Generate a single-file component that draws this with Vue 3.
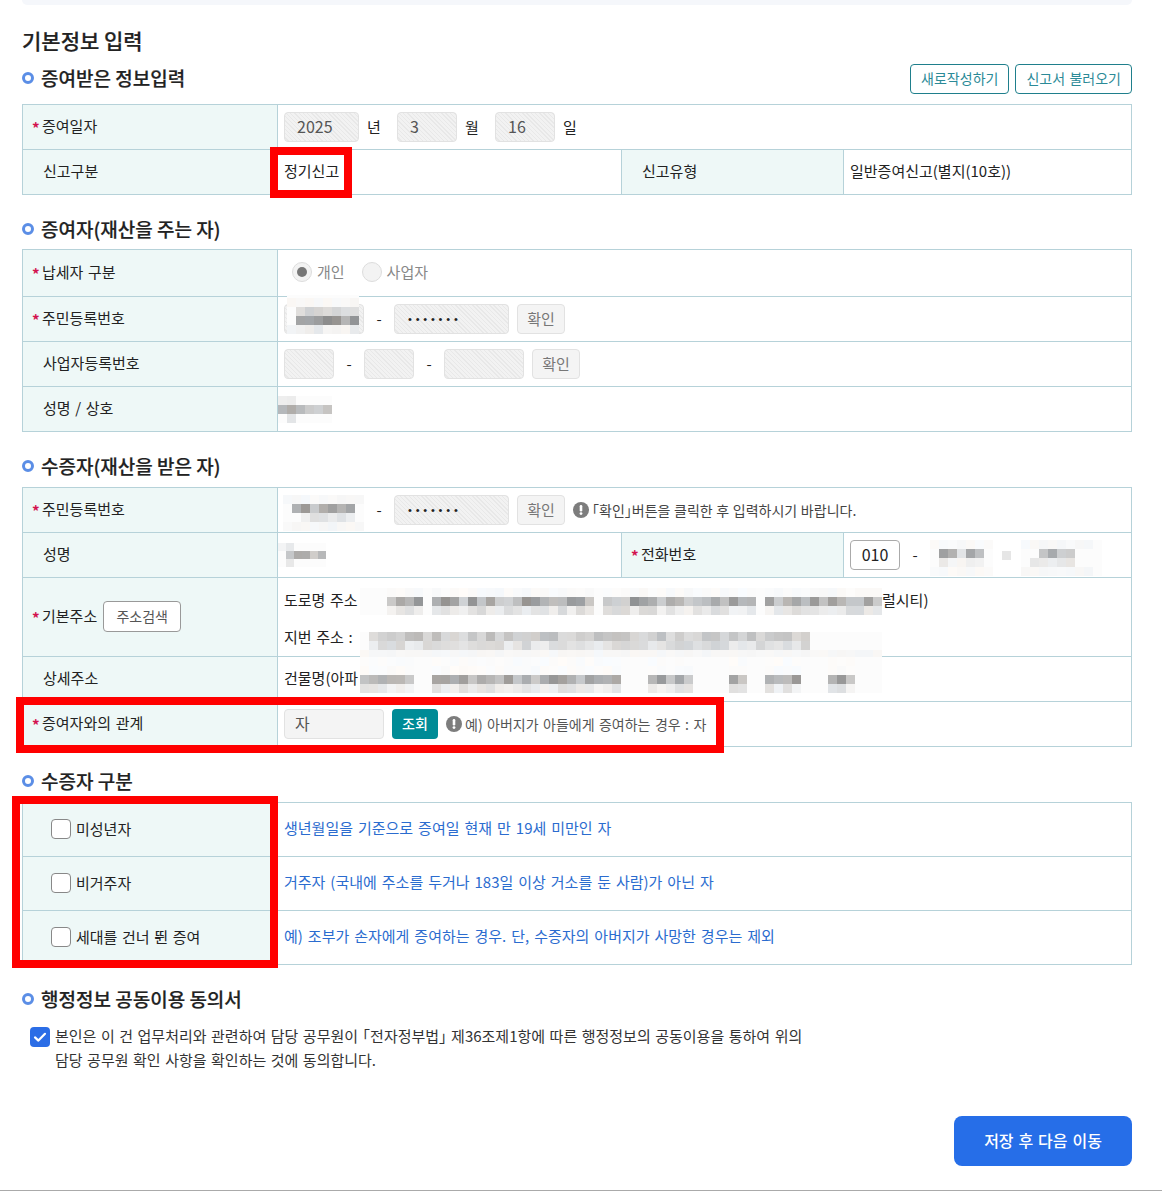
<script setup>
import { h } from 'vue'

// pixelated privacy blur. rows: [lightLo, lightHi, fromCol, toCol], spans: inked column ranges
function Mosaic(props) {
  const { cols, rows, seed = 1, cell = 9, spans = null } = props
  let s = seed * 9301 + 49297
  const rnd = () => {
    s = (s * 9301 + 49297) % 233280
    return s / 233280
  }
  const inSpan = (i) => !spans || spans.some(([a, b]) => i >= a && i < b)
  const cells = []
  rows.forEach(([lo, hi, from = 0, to = cols]) => {
    for (let i = 0; i < cols; i++) {
      const inked = i >= from && i < to && inSpan(i)
      const v = inked ? Math.round(lo + rnd() * (hi - lo)) : 252
      const tint = inked ? Math.round(rnd() * 6) - 3 : 0
      cells.push(h('i', { style: { background: `rgb(${v + tint},${v},${v - tint})` } }))
    }
  })
  return h(
    'span',
    {
      style: {
        display: 'inline-grid',
        flex: 'none',
        gridTemplateColumns: `repeat(${cols}, ${cell}px)`,
        gridAutoRows: `${cell}px`,
        background: '#fff'
      }
    },
    cells
  )
}
Mosaic.props = ['cols', 'rows', 'seed', 'cell', 'spans']

const roadSpans = [[3, 7], [8, 26], [27, 44], [45, 58]]
const bldSpans = [[0, 6], [8, 29], [32, 37], [41, 43], [45, 49], [52, 55]]
const kinds = [
  { name: '미성년자', note: '생년월일을 기준으로 증여일 현재 만 19세 미만인 자' },
  { name: '비거주자', note: '거주자 (국내에 주소를 두거나 183일 이상 거소를 둔 사람)가 아닌 자' },
  { name: '세대를 건너 뛴 증여', note: '예) 조부가 손자에게 증여하는 경우. 단, 수증자의 아버지가 사망한 경우는 제외' }
]
</script>

<template>
  <div class="page">
    <div class="top-bar"></div>
    <h1 class="title">기본정보 입력</h1>

    <div class="section-head first">
      <h2><i class="dot"></i>증여받은 정보입력</h2>
      <div class="head-btns">
        <button type="button" class="btn-line">새로작성하기</button>
        <button type="button" class="btn-line">신고서 불러오기</button>
      </div>
    </div>
    <table class="form">
      <colgroup><col class="c1" /><col class="c2" /><col class="c3" /><col class="c4" /></colgroup>
      <tbody>
        <tr>
          <th class="req">증여일자</th>
          <td colspan="3">
            <div class="fields">
              <span class="inp hatch w75">2025</span><span class="unit">년</span>
              <span class="inp hatch w60">3</span><span class="unit">월</span>
              <span class="inp hatch w60">16</span><span class="unit">일</span>
            </div>
          </td>
        </tr>
        <tr>
          <th>신고구분</th>
          <td>정기신고</td>
          <th>신고유형</th>
          <td>일반증여신고(별지(10호))</td>
        </tr>
      </tbody>
    </table>

    <div class="section-head tight">
      <h2><i class="dot"></i>증여자(재산을 주는 자)</h2>
    </div>
    <table class="form">
      <colgroup><col class="c1" /><col class="c2" /><col class="c3" /><col class="c4" /></colgroup>
      <tbody>
        <tr class="tall">
          <th class="req">납세자 구분</th>
          <td colspan="3">
            <div class="radios">
              <label class="radio"><i class="radio-mark on"></i>개인</label>
              <label class="radio"><i class="radio-mark"></i>사업자</label>
            </div>
          </td>
        </tr>
        <tr>
          <th class="req">주민등록번호</th>
          <td colspan="3" class="rel">
            <div class="fields">
              <span class="inp hatch w80"></span><span class="dash">-</span>
              <span class="inp hatch w115 dots">•••••••</span>
              <button type="button" class="btn-gray">확인</button>
            </div>
            <Mosaic class="m-jumin" :cols="8" :seed="3" :rows="[[246, 250], [205, 228, 1, 8], [140, 185, 1, 8], [232, 246]]" />
          </td>
        </tr>
        <tr>
          <th>사업자등록번호</th>
          <td colspan="3">
            <div class="fields">
              <span class="inp hatch w50"></span><span class="dash">-</span>
              <span class="inp hatch w50"></span><span class="dash">-</span>
              <span class="inp hatch w80"></span>
              <button type="button" class="btn-gray">확인</button>
            </div>
          </td>
        </tr>
        <tr>
          <th>성명 / 상호</th>
          <td colspan="3" class="flush">
            <Mosaic :cols="6" :seed="5" :rows="[[220, 240, 0, 2], [165, 215, 0, 6], [225, 235, 1, 2]]" />
          </td>
        </tr>
      </tbody>
    </table>

    <div class="section-head">
      <h2><i class="dot"></i>수증자(재산을 받은 자)</h2>
    </div>
    <table class="form">
      <colgroup><col class="c1" /><col class="c2" /><col class="c3" /><col class="c4" /></colgroup>
      <tbody>
        <tr>
          <th class="req">주민등록번호</th>
          <td colspan="3" class="rel">
            <div class="fields">
              <span class="inp hatch w80"></span><span class="dash">-</span>
              <span class="inp hatch w115 dots">•••••••</span>
              <button type="button" class="btn-gray">확인</button>
              <span class="hint">
                <svg width="16" height="16" viewBox="0 0 16 16"><circle cx="8" cy="8" r="8" fill="#7d7d7d" /><rect x="6.7" y="3" width="2.6" height="6.4" rx="1.2" fill="#fff" /><circle cx="8" cy="11.6" r="1.4" fill="#fff" /></svg>
                <span class="tight-word"><span class="half">「확인」</span>버튼을 클릭한 후 입력하시기 바랍니다.</span>
              </span>
            </div>
            <Mosaic class="m-jumin2" :cols="9" :seed="7" :rows="[[246, 250], [150, 205, 1, 8], [218, 240, 2, 8], [245, 250]]" />
          </td>
        </tr>
        <tr>
          <th>성명</th>
          <td class="flush">
            <Mosaic :cols="6" :cell="8" :seed="11" :rows="[[232, 245, 0, 2], [150, 215, 1, 6], [225, 240, 1, 2]]" />
          </td>
          <th class="req">전화번호</th>
          <td>
            <div class="fields">
              <span class="inp w50 plain-white">010</span><span class="dash">-</span>
              <Mosaic class="m-phone" :cols="7" :seed="13" :rows="[[248, 251], [155, 230, 1, 6], [232, 248, 1, 6], [248, 251]]" />
              <i class="dot-mask"></i>
              <Mosaic class="m-phone" :cols="9" :seed="17" :rows="[[246, 250, 0, 8], [150, 215, 2, 6], [228, 245, 1, 6], [246, 250, 0, 8]]" />
            </div>
          </td>
        </tr>
        <tr class="addr">
          <th class="req">
            <div class="with-btn">기본주소<button type="button" class="btn-outline">주소검색</button></div>
          </th>
          <td colspan="3" class="addr-cell">
            <div class="addr-line">
              <span class="addr-label">도로명 주소</span>
              <Mosaic class="m-road" :cols="58" :seed="19" :spans="roadSpans" :rows="[[248, 252], [145, 210], [215, 245]]" />
              럴시티)
            </div>
            <div class="addr-line">
              <span class="addr-label">지번 주소 :</span>
              <Mosaic class="m-jibun" :cols="58" :seed="23" :rows="[[185, 222, 1, 50], [210, 240, 1, 50], [246, 248]]" />
            </div>
          </td>
        </tr>
        <tr>
          <th>상세주소</th>
          <td colspan="3">
            <div class="addr-line short">
              <span class="addr-label">건물명(아파</span>
              <Mosaic class="m-bld" :cols="58" :seed="29" :spans="bldSpans" :rows="[[251, 252], [250, 252], [150, 205], [222, 246]]" />
            </div>
          </td>
        </tr>
        <tr>
          <th class="req">증여자와의 관계</th>
          <td colspan="3">
            <div class="fields">
              <span class="inp plain w100">자</span>
              <button type="button" class="btn-teal">조회</button>
              <span class="hint muted">
                <svg width="16" height="16" viewBox="0 0 16 16"><circle cx="8" cy="8" r="8" fill="#7d7d7d" /><rect x="6.7" y="3" width="2.6" height="6.4" rx="1.2" fill="#fff" /><circle cx="8" cy="11.6" r="1.4" fill="#fff" /></svg>
                <span>예) 아버지가 아들에게 증여하는 경우 : 자</span>
              </span>
            </div>
          </td>
        </tr>
      </tbody>
    </table>

    <div class="section-head">
      <h2><i class="dot"></i>수증자 구분</h2>
    </div>
    <table class="form kinds">
      <colgroup><col class="c1" /><col /></colgroup>
      <tbody>
        <tr v-for="k in kinds" :key="k.name">
          <th><label class="check"><i class="check-mark"></i>{{ k.name }}</label></th>
          <td class="link">{{ k.note }}</td>
        </tr>
      </tbody>
    </table>

    <div class="section-head">
      <h2><i class="dot"></i>행정정보 공동이용 동의서</h2>
    </div>
    <div class="agree">
      <svg class="agree-box" width="20" height="20" viewBox="0 0 20 20">
        <rect width="20" height="20" rx="4" fill="#2b6de6" />
        <path d="M5 10.4l3.4 3.2L15 6.8" fill="none" stroke="#fff" stroke-width="2.2" stroke-linecap="round" stroke-linejoin="round" />
      </svg>
      <p>본인은 이 건 업무처리와 관련하여 담당 공무원이 <span class="half">「전자정부법」</span> 제36조제1항에 따른 행정정보의 공동이용을 통하여 위의<br />담당 공무원 확인 사항을 확인하는 것에 동의합니다.</p>
    </div>

    <div class="actions">
      <button type="button" class="btn-next">저장 후 다음 이동</button>
    </div>

    <!-- review markers drawn on top of the form -->
    <div class="mark mark-1"></div>
    <div class="mark mark-2"></div>
    <div class="mark mark-3"></div>
  </div>
</template>

<style>
html, body { background: #fff; }
</style>

<style scoped>
.page {
  position: relative;
  box-sizing: border-box;
  width: 1162px;
  height: 1191px;
  padding: 0 30px 0 22px;
  border-bottom: 1px solid #aaa;
  font-family: "Noto Sans CJK KR", "Noto Sans", sans-serif;
  font-size: 15px;
  word-spacing: 1.3px;
  color: #222;
  overflow: hidden;
}

.top-bar {
  height: 5px;
  background: #f5f7fb;
  border-radius: 0 0 10px 10px;
}

.title {
  margin: 20px 0 9px;
  font-size: 21px;
  line-height: 30px;
  font-weight: 500;
  word-spacing: 0;
  color: #222;
  -webkit-text-stroke: 0.2px #222;
}

.section-head {
  display: flex;
  align-items: center;
  justify-content: space-between;
  height: 26px;
  margin: 21px 0 8px;
}

.section-head.tight {
  margin-bottom: 7px;
}

.section-head.first {
  height: 30px;
  margin: 0 0 10px;
}

.section-head.first h2 {
  margin-top: -2px;
}

.section-head h2 {
  display: flex;
  align-items: center;
  margin: 0;
  font-size: 19px;
  line-height: 26px;
  font-weight: 500;
  word-spacing: 0;
  color: #222;
  -webkit-text-stroke: 0.2px #222;
}

.dot {
  box-sizing: border-box;
  width: 12px;
  height: 12px;
  margin-right: 7px;
  border: 3.5px solid #5b8ee6;
  border-radius: 50%;
}

.head-btns {
  display: flex;
  gap: 6px;
}

.btn-line {
  box-sizing: border-box;
  height: 30px;
  padding: 0 10px 2px;
  background: #fff;
  border: 1px solid #1f7f8c;
  border-radius: 4px;
  font: inherit;
  font-size: 14px;
  word-spacing: inherit;
  color: #2b8a97;
}

.form {
  width: 1110px;
  border-collapse: collapse;
  table-layout: fixed;
  line-height: 22px;
}

.c1 { width: 255px; }
.c2 { width: 344px; }
.c3 { width: 222px; }
.c4 { width: 288px; }

.form th,
.form td {
  box-sizing: border-box;
  height: 45px;
  padding: 0 6px 2px;
  border: 1px solid #b6d2d9;
  font-weight: 400;
  text-align: left;
  vertical-align: middle;
}

.form th {
  padding-left: 20px;
  background: #eef8f7;
}

.form th.req {
  padding-left: 9px;
}

.form th.req::before {
  content: "*";
  display: inline-block;
  width: 10px;
  line-height: 1;
  vertical-align: -2px;
  color: #d3134f;
  font-size: 15px;
  font-weight: 700;
}

.tall th,
.tall td {
  height: 47px;
}

.addr th,
.addr td {
  height: 79px;
}

.addr-cell {
  padding-top: 2px !important;
  padding-bottom: 0 !important;
}

.rel {
  position: relative;
}

.flush {
  padding-left: 0 !important;
  padding-bottom: 0 !important;
  line-height: 0;
}

.fields {
  display: flex;
  align-items: center;
  margin-top: 2px;
}

.inp {
  box-sizing: border-box;
  height: 30px;
  padding-left: 12px;
  border: 1px solid #e2e2e2;
  border-radius: 4px;
  line-height: 26px;
  font-size: 16px;
  color: #555;
}

.hatch {
  background: repeating-linear-gradient(45deg, #f2f2f2 0, #f2f2f2 2px, #e8e8e8 2px, #e8e8e8 3px);
}

.plain {
  padding-left: 10px;
  background: #f4f4f4;
}

.plain-white {
  padding-left: 0;
  background: #fff;
  border-color: #aaa;
  text-align: center;
  color: #222;
}

.w50 { width: 50px; }
.w60 { width: 60px; }
.w75 { width: 75px; }
.w80 { width: 80px; }
.w100 { width: 100px; }
.w115 { width: 115px; }

.dots {
  padding-left: 13px;
  letter-spacing: 3.8px;
  line-height: 28px;
  color: #222;
  font-family: "Liberation Sans", sans-serif;
  font-size: 11px;
}

.unit {
  width: 14px;
  margin: 0 16px 0 8px;
}

.dash {
  width: 30px;
  text-align: center;
}

.btn-gray {
  box-sizing: border-box;
  width: 48px;
  height: 30px;
  margin-left: 8px;
  padding: 0;
  background: #f4f4f4;
  border: 1px solid #e2e2e2;
  border-radius: 4px;
  font: inherit;
  color: #777;
}

.hint {
  display: inline-flex;
  align-items: center;
  gap: 3px;
  margin-left: 8px;
  font-size: 14px;
  color: #444;
}

.hint.muted {
  color: #555;
}

.tight-word {
  word-spacing: 0.5px;
}

/* corner brackets set at half an em, as the reference does */
.half {
  font-feature-settings: "halt";
}

.btn-teal {
  box-sizing: border-box;
  width: 46px;
  height: 30px;
  margin-left: 8px;
  padding: 0 0 2px;
  background: #008b96;
  border: 0;
  border-radius: 4px;
  font: inherit;
  font-size: 14px;
  font-weight: 500;
  color: #fff;
}

.btn-outline {
  box-sizing: border-box;
  width: 78px;
  height: 31px;
  margin-left: 6px;
  padding: 0;
  background: #fff;
  border: 1px solid #999;
  border-radius: 4px;
  font: inherit;
  font-size: 14px;
  color: #555;
}

.with-btn {
  display: inline-flex;
  align-items: center;
}

.radios {
  display: flex;
  gap: 17px;
  padding-left: 8px;
}

.radio {
  display: flex;
  align-items: center;
  gap: 5px;
  color: #888;
}

.radio-mark {
  box-sizing: border-box;
  display: flex;
  align-items: center;
  justify-content: center;
  width: 20px;
  height: 20px;
  background: #f3f3f3;
  border: 1px solid #ddd;
  border-radius: 50%;
}

.radio-mark.on::after {
  content: "";
  width: 10px;
  height: 10px;
  background: #777;
  border-radius: 50%;
}

.m-jumin {
  position: absolute;
  left: 9px;
  top: 1px;
  box-shadow: 0 -3px 0 #fcfcfc;
}

.m-jumin2 {
  position: absolute;
  left: 1px;
  top: 1px;
  padding: 6px 4px 0;
}

.m-phone {
  margin: 3px 0 -3px;
}

.dot-mask {
  width: 9px;
  height: 9px;
  margin: 0 10px 0 9px;
  background: #e6e6e6;
}

.addr-line {
  display: flex;
  align-items: center;
  height: 37px;
}

.addr-line.short {
  height: 36px;
}

.addr-label {
  flex: none;
  width: 76px;
  white-space: nowrap;
}

.m-road {
  margin-top: 3px;
}

.m-jibun {
  margin-top: 17px;
}

.m-bld {
  margin-top: -7px;
}

.kinds th,
.kinds td {
  height: 54px;
}

.kinds th {
  padding-left: 28px;
  padding-bottom: 2px;
}

.check {
  display: flex;
  align-items: center;
  gap: 5px;
}

.check-mark {
  box-sizing: border-box;
  width: 20px;
  height: 20px;
  background: #fff;
  border: 1px solid #888;
  border-radius: 4px;
}

.form .link {
  padding-bottom: 4px;
  word-spacing: 1.6px;
  color: #2b6ccf;
}

.agree {
  display: flex;
  margin: 12px 0 0 8px;
}

.agree-box {
  flex: none;
  margin-top: 3px;
}

.agree p {
  margin: 0 0 0 5px;
  line-height: 24px;
  word-spacing: 1.15px;
  color: #333;
}

.actions {
  display: flex;
  justify-content: flex-end;
  margin-top: 44px;
}

.btn-next {
  width: 178px;
  height: 50px;
  padding: 0 0 2px;
  background: #266ee8;
  border: 0;
  border-radius: 8px;
  font: inherit;
  font-size: 16px;
  font-weight: 500;
  word-spacing: inherit;
  color: #fff;
}

.mark {
  position: absolute;
  box-sizing: border-box;
  border: 8px solid #f00;
  pointer-events: none;
}

.mark-1 {
  left: 270px;
  top: 147px;
  width: 82px;
  height: 51px;
}

.mark-2 {
  left: 16px;
  top: 697px;
  width: 708px;
  height: 56px;
}

.mark-3 {
  left: 12px;
  top: 796px;
  width: 266px;
  height: 172px;
}
</style>
